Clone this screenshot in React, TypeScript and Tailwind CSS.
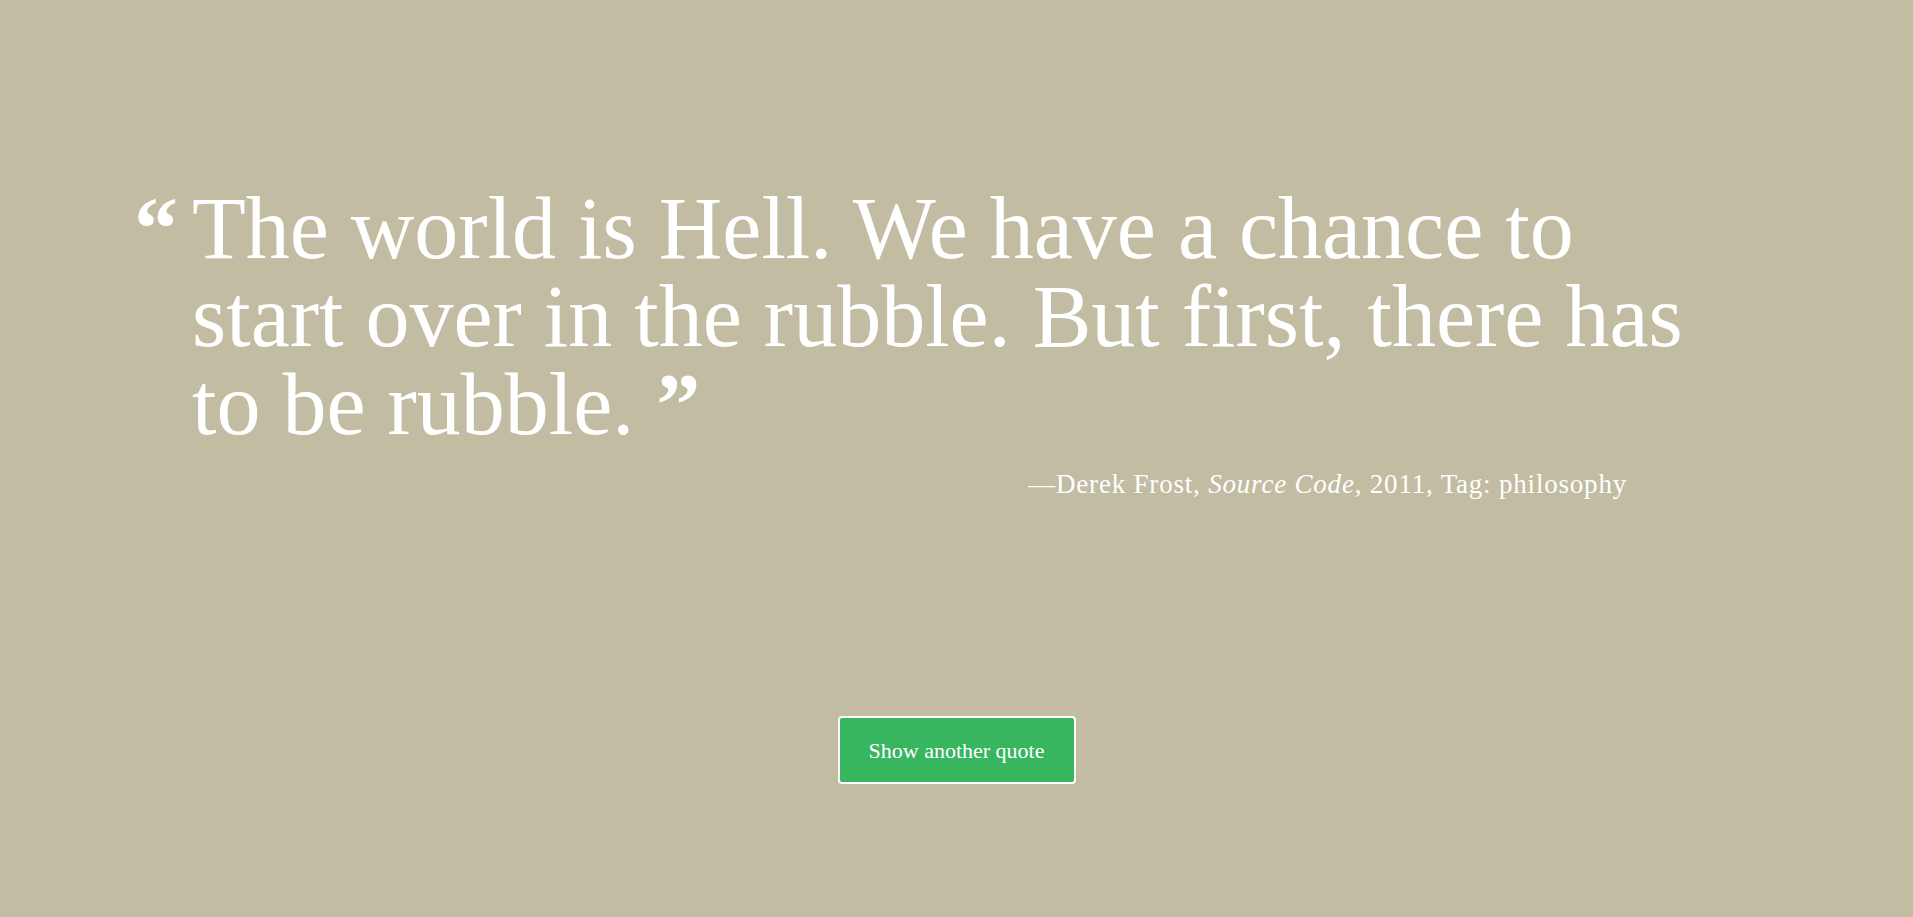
import React from "react";

const quote = {
  text: "The world is Hell. We have a chance to start over in the rubble. But first, there has to be rubble.",
  author: "Derek Frost",
  source: "Source Code",
  year: "2011",
  tag: "philosophy",
};

const App = () => {
  return (
    <div
      className="min-h-screen w-full bg-[#c1bca2] text-white"
      style={{ fontFamily: "'Liberation Serif', 'Times New Roman', serif" }}
    >
      <div className="pl-[134px] pt-[185px]">
        {/* Quote */}
        <div className="flex">
          <span className="w-[58px] shrink-0 text-[88px] leading-[88px] font-bold">
            “
          </span>
          <p className="w-[1530px] text-[88px] leading-[88px]">
            {quote.text} <span className="font-bold">”</span>
          </p>
        </div>

        {/* Attribution */}
        <div className="ml-[58px] mt-[15px] w-[1435px] text-right text-[27px] leading-[40px] tracking-[0.8px]">
          —{quote.author}, <em>{quote.source}</em>, {quote.year}, Tag: {quote.tag}
        </div>
      </div>

      <div className="mt-[212px] flex justify-center">
        <button className="flex h-[68px] w-[238px] items-center justify-center rounded-[4px] border-2 border-white bg-[#37b55f] text-[22px] text-white">
          Show another quote
        </button>
      </div>
    </div>
  );
};

export default App;
